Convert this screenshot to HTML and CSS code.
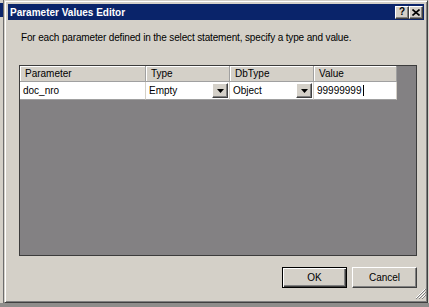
FILE: index.html
```html
<!DOCTYPE html>
<html lang="en">
<head>
  <meta charset="UTF-8">
  <title>Parameter Values Editor</title>
  <link rel="stylesheet" href="styles.css">
</head>
<body>

<div class="screen">
  <div class="behind">
    <div class="behind-title"></div>
  </div>

  <div class="dialog">
    <div class="titlebar">
      <span class="title">Parameter Values Editor</span>
      <div class="caption-btns">
        <button class="cap-btn help">?</button>
        <button class="cap-btn close">
          <svg width="8" height="7" viewBox="0 0 8 7">
            <path d="M0.5 0.5 L7.5 6.5 M7.5 0.5 L0.5 6.5" stroke="#000" stroke-width="1.6" fill="none"/>
          </svg>
        </button>
      </div>
    </div>

    <div class="content">
      <p class="intro">For each parameter defined in the select statement, specify a type and value.</p>

      <div class="grid">
        <div class="row head">
          <div class="cell">Parameter</div>
          <div class="cell">Type</div>
          <div class="cell">DbType</div>
          <div class="cell">Value</div>
        </div>
        <div class="row data">
          <div class="cell">doc_nro</div>
          <div class="cell combo">
            <span>Empty</span>
            <span class="drop"><svg width="7" height="4" viewBox="0 0 7 4"><path d="M0 0 H7 L3.5 4 Z" fill="#000"/></svg></span>
          </div>
          <div class="cell combo">
            <span>Object</span>
            <span class="drop"><svg width="7" height="4" viewBox="0 0 7 4"><path d="M0 0 H7 L3.5 4 Z" fill="#000"/></svg></span>
          </div>
          <div class="cell editing"><span class="caret">99999999</span></div>
        </div>
      </div>

      <div class="buttons">
        <button class="btn default">OK</button>
        <button class="btn">Cancel</button>
      </div>

      <div class="footer">
        <svg class="grip" width="11" height="11" viewBox="0 0 11 11">
          <path d="M10 1 L1 10 M10 4 L4 10 M10 7 L7 10" stroke="#fff" stroke-width="1"/>
          <path d="M11 1 L1 11 M11 4 L4 11 M11 7 L7 11" stroke="#808080" stroke-width="1"/>
        </svg>
      </div>
    </div>
  </div>
</div>

</body>
</html>
```

FILE: styles.css
```css
* { box-sizing: border-box; }

body {
  margin: 0;
  background: #8e8d8b;
  font-family: Tahoma, "Liberation Sans", Arial, sans-serif;
  font-size: 10px;
  color: #000;
}

.screen {
  display: flex;
  width: 429px;
  height: 303px;
  background: #d4d0c8;
}

.behind {
  width: 4px;
  border-right: 1px solid #6e6e6e;
}
.behind-title {
  height: 14px;
  margin-top: 3px;
  background: #0a246a;
}

.dialog {
  width: 424px;
  height: 303px;
  border: 1px solid;
  border-color: #d4d0c8 #404040 #404040 #d4d0c8;
  box-shadow: inset 1px 1px #fff, inset -1px -1px #808080;
  padding: 3px;
  display: flex;
  flex-direction: column;
}

.titlebar {
  height: 17px;
  background: #0a246a;
  display: flex;
  align-items: center;
  justify-content: space-between;
  padding: 0 1px 0 2px;
}
.title {
  color: #fff;
  font-weight: bold;
  font-size: 10px;
}
.caption-btns { display: flex; }
.cap-btn {
  width: 14px;
  height: 13px;
  padding: 0;
  margin: 0;
  background: #d4d0c8;
  border: 1px solid;
  border-color: #fff #404040 #404040 #fff;
  box-shadow: inset -1px -1px #808080;
  display: flex;
  align-items: center;
  justify-content: center;
  font-family: "Liberation Sans", Arial, sans-serif;
  font-weight: bold;
  font-size: 10px;
  line-height: 1;
}

.content {
  flex: 1;
  display: flex;
  flex-direction: column;
}

.intro {
  margin: 12px 0 0 13px;
  line-height: 12px;
  letter-spacing: -0.15px;
}

.grid {
  margin: 21px 0 0 11px;
  width: 398px;
  height: 191px;
  border: 1px solid #3c3c3c;
  background: #838183;
}

.row {
  display: grid;
  grid-template-columns: 126px 84px 84px 83px;
}

.head .cell {
  height: 16px;
  line-height: 15px;
  padding-left: 5px;
  background: #d4d0c8;
  border-right: 1px solid #a0a0a0;
  border-bottom: 1px solid #a0a0a0;
  box-shadow: inset 1px 1px #fff;
}

.data .cell {
  height: 18px;
  line-height: 17px;
  padding-left: 3px;
  background: #fff;
  border-right: 1px solid #d4d0c8;
  border-bottom: 1px solid #a0a0a0;
}

.combo {
  display: flex;
  justify-content: space-between;
  align-items: center;
}
.drop {
  width: 16px;
  height: 15px;
  margin-right: 1px;
  background: #d4d0c8;
  border: 1px solid;
  border-color: #fff #404040 #404040 #fff;
  box-shadow: inset -1px -1px #808080;
  display: flex;
  align-items: center;
  justify-content: center;
}

.editing { padding-left: 2px; }
.caret {
  border-right: 1px solid #000;
  padding-right: 1px;
}

.buttons {
  display: flex;
  justify-content: flex-end;
  gap: 5px;
  margin: 11px 7px 0 0;
}
.btn {
  width: 65px;
  height: 21px;
  padding: 0;
  background: #d4d0c8;
  border: 1px solid;
  border-color: #fff #404040 #404040 #fff;
  box-shadow: inset -1px -1px #808080;
  font-family: Tahoma, "Liberation Sans", Arial, sans-serif;
  font-size: 10px;
  color: #000;
}
.btn.default {
  border: 1px solid #000;
  box-shadow: inset 1px 1px #fff, inset -1px -1px #404040, inset -2px -2px #808080;
}

.footer {
  flex: 1;
  display: flex;
  justify-content: flex-end;
  align-items: flex-end;
}
.grip { margin-right: -2px; }
```
